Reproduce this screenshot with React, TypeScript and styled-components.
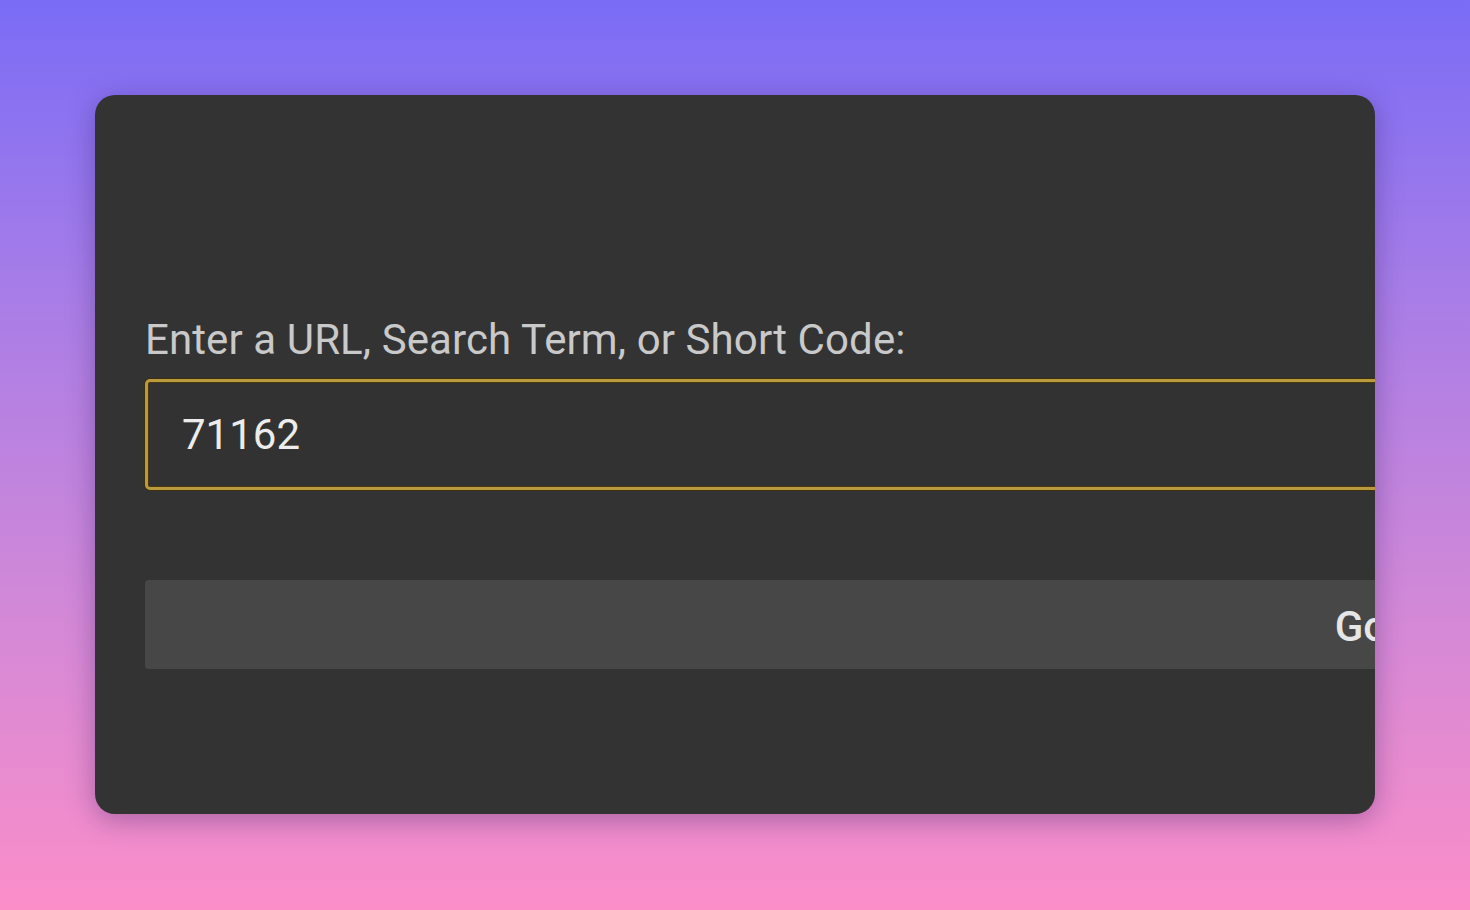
import React from "react";
import styled, { createGlobalStyle } from "styled-components";

const Global = createGlobalStyle`
  html, body { margin: 0; padding: 0; }
  body {
    width: 1470px;
    height: 910px;
    overflow: hidden;
    background: linear-gradient(180deg, #7a6cf6 0%, #a57ce8 30%, #d088d8 65%, #fb8ec9 100%);
    font-family: Roboto, "Noto Sans", sans-serif;
  }
`;

const Page = styled.div`
  height: 910px;
  box-sizing: border-box;
  padding: 95px 95px 96px 95px;
`;

const Card = styled.div`
  height: 719px;
  box-sizing: border-box;
  background: #333333;
  border-radius: 20px;
  box-shadow: 0 6px 28px rgba(40, 20, 90, 0.35);
  overflow: hidden;
  padding: 220px 0 0 50px;
`;

const Form = styled.div`
  width: 2432px;
  display: flex;
  flex-direction: column;
`;

const Label = styled.label`
  font-size: 42px;
  color: #c9c9c9;
  line-height: 50px;
  letter-spacing: 0.1px;
  margin-bottom: 14px;
`;

const Field = styled.div`
  height: 111px;
  box-sizing: border-box;
  border: 3px solid #b99a3c;
  border-radius: 5px;
  box-shadow: inset 0 0 0 1px #4a3812, 0 0 0 1px #3d2f10;
  background: #323232;
  display: flex;
  align-items: center;
  padding-left: 34px;
  font-size: 42px;
  color: #ececec;
`;

const Button = styled.div`
  margin-top: 90px;
  height: 89px;
  background: #474747;
  border-radius: 4px;
  display: flex;
  align-items: center;
  justify-content: center;
  padding-top: 4px;
  box-sizing: border-box;
  font-size: 42px;
  font-weight: 500;
  color: #e6e6e6;
`;

export default function App() {
  return (
    <>
      <Global />
      <Page>
        <Card>
          <Form>
            <Label>Enter a URL, Search Term, or Short Code:</Label>
            <Field>71162</Field>
            <Button>Go</Button>
          </Form>
        </Card>
      </Page>
    </>
  );
}
